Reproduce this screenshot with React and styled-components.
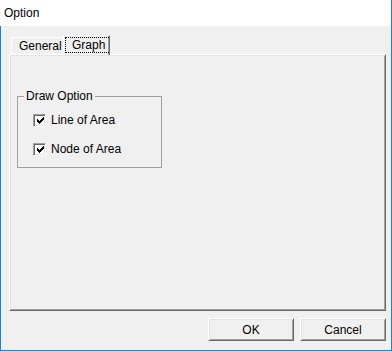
import React from "react";
import styled, { createGlobalStyle } from "styled-components";

const Global = createGlobalStyle`
  html, body { margin: 0; padding: 0; background: #f0f0f0; }
  body { font-family: "Liberation Sans", Arial, sans-serif; font-size: 12px; color: #000; }
  * { box-sizing: border-box; }
`;

const BLUE = "#1883d7";

const Window = styled.div`
  width: 392px;
  height: 351px;
  display: flex;
  flex-direction: column;
  background: #f0f0f0;
`;

const TitleBar = styled.div`
  height: 26px;
  flex: none;
  background: #fff;
  border-right: 1px solid ${BLUE};
  padding: 6px 0 0 4px;
  font-size: 12px;
  line-height: 14px;
`;

const Body = styled.div`
  flex: 1;
  display: flex;
  flex-direction: column;
  border: 1px solid ${BLUE};
  border-top: none;
  padding: 9px 5px 9px 8px;
  min-height: 0;
`;

const TabStrip = styled.div`
  height: 19px;
  flex: none;
  display: flex;
  align-items: flex-end;
  padding-left: 2px;
  position: relative;
  z-index: 2;
`;

const Tab = styled.div`
  position: relative;
  z-index: ${(p) => (p.$active ? 2 : 1)};
  width: ${(p) => p.$w}px;
  height: ${(p) => (p.$active ? 20 : 17)}px;
  margin-left: ${(p) => p.$ml || 0}px;
  margin-bottom: ${(p) => (p.$active ? -1 : 0)}px;
  align-self: ${(p) => (p.$active ? "flex-start" : "flex-end")};
  background: #f0f0f0;
  border-left: 1px solid #fff;
  border-top: 1px solid #fff;
  border-right: 1px solid #696969;
  box-shadow: inset -1px 0 0 #a0a0a0;
  border-top-left-radius: 1px;
  border-top-right-radius: 1px;
  display: flex;
  align-items: ${(p) => (p.$active ? "flex-start" : "center")};
  padding-left: ${(p) => p.$pl}px;
  padding-top: ${(p) => (p.$active ? 1 : 0)}px;
  line-height: 14px;
  white-space: nowrap;
  overflow: hidden;
`;

const Focus = styled.span`
  display: inline-block;
  border: 1px dotted #000;
  padding: 0 5px 0 6px;
  line-height: 14px;
`;

const Panel = styled.div`
  flex: 1;
  position: relative;
  z-index: 1;
  border-top: 1px solid #fff;
  border-left: 1px solid #fff;
  border-right: 1px solid #696969;
  border-bottom: 1px solid #696969;
  box-shadow: inset 1px 1px 0 #e3e3e3, inset -1px -1px 0 #a0a0a0;
  padding: 34px 0 0 7px;
`;

const Group = styled.fieldset`
  margin: 0;
  padding: 0;
  width: 145px;
  min-inline-size: 0;
  border: 1px solid #a0a0a0;
`;

const Legend = styled.legend`
  margin-left: 6px;
  padding: 0 2px;
  line-height: 14px;
  font-size: 12px;
`;

const GroupBody = styled.div`
  display: flex;
  flex-direction: column;
  gap: 13px;
  padding: 9px 0 10px 15px;
`;

const CheckRow = styled.label`
  display: flex;
  align-items: center;
  height: 16px;
  gap: 5px;
  line-height: 14px;
`;

const Box = styled.span`
  width: 13px;
  height: 13px;
  flex: none;
  background: #fff;
  border: 1px solid;
  border-color: #a0a0a0 #fff #fff #a0a0a0;
  box-shadow: inset 1px 1px 0 #696969, inset -1px -1px 0 #e3e3e3;
  display: flex;
  align-items: center;
  justify-content: center;
`;

const ButtonRow = styled.div`
  flex: none;
  display: flex;
  justify-content: flex-end;
  gap: 6px;
  margin-top: 7px;
`;

const Button = styled.button`
  width: 86px;
  height: 23px;
  padding: 0;
  font-family: "Liberation Sans", Arial, sans-serif;
  font-size: 12px;
  color: #000;
  background: #f0f0f0;
  border: 1px solid;
  border-color: #fff #696969 #696969 #fff;
  box-shadow: inset 1px 1px 0 #e3e3e3, inset -1px -1px 0 #a0a0a0;
  border-radius: 0;
`;

const Check = () => (
  <svg width="7" height="7" viewBox="0 0 7 7" shapeRendering="crispEdges" style={{ marginLeft: 1, marginTop: 1 }}>
    <path
      fill="#000"
      d="M6 0h1v3h-1z M5 1h1v3h-1z M4 2h1v3h-1z M3 3h1v3h-1z M2 4h1v3h-1z M1 3h1v3h-1z M0 2h1v3h-1z"
    />
  </svg>
);

const Checkbox = ({ label }) => (
  <CheckRow>
    <Box>
      <Check />
    </Box>
    <span>{label}</span>
  </CheckRow>
);

export default function App() {
  return (
    <>
      <Global />
      <Window>
        <TitleBar>Option</TitleBar>
        <Body>
          <TabStrip>
            <Tab $w={54} $pl={7}>General</Tab>
            <Tab $w={47} $ml={-2} $pl={1} $active>
              <Focus>Graph</Focus>
            </Tab>
          </TabStrip>
          <Panel>
            <Group>
              <Legend>Draw Option</Legend>
              <GroupBody>
                <Checkbox label="Line of Area" />
                <Checkbox label="Node of Area" />
              </GroupBody>
            </Group>
          </Panel>
          <ButtonRow>
            <Button>OK</Button>
            <Button>Cancel</Button>
          </ButtonRow>
        </Body>
      </Window>
    </>
  );
}
